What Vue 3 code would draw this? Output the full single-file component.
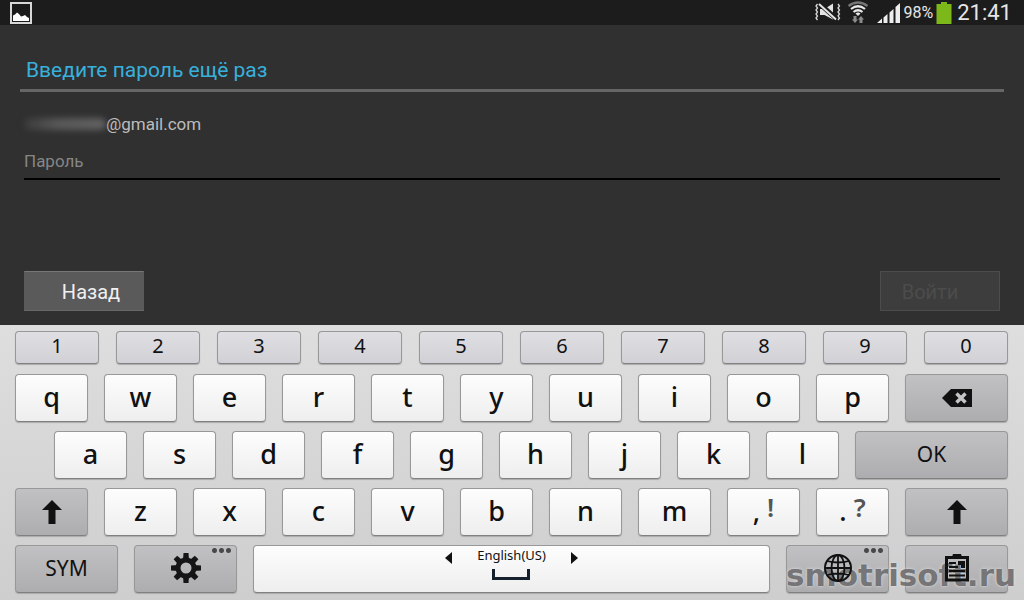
<script setup>
const digits = ['1', '2', '3', '4', '5', '6', '7', '8', '9', '0']
const rowTop = ['q', 'w', 'e', 'r', 't', 'y', 'u', 'i', 'o', 'p']
const rowHome = ['a', 's', 'd', 'f', 'g', 'h', 'j', 'k', 'l']
const rowBottom = ['z', 'x', 'c', 'v', 'b', 'n', 'm']
const teeth = [0, 45, 90, 135, 180, 225, 270, 315]
</script>

<template>
  <div class="screen">
    <header class="status">
      <svg class="picture" width="22" height="22" viewBox="0 0 22 22">
        <rect x="1" y="1" width="20" height="20" fill="#1b1b1b" stroke="#d8d8d8" stroke-width="2" />
        <path d="M3 19V13.500L5 12.500L7 10.500L9 12L11 14.500L13 14L15 13L17 15L19 16V19Z" fill="#fff" />
      </svg>
      <div class="indicators">
        <svg width="26" height="22" viewBox="0 0 26 22">
          <path d="M5 7H9.500L18 1.500V17.500L9.500 13H5Z" fill="#e4e4e4" />
          <path d="M2.500 2L1 4L2.500 6L1 8L2.500 10L1 12L2.500 14L1 16L2.500 18M23 2L24.500 4L23 6L24.500 8L23 10L24.500 12L23 14L24.500 16L23 18" fill="none" stroke="#d8d8d8" stroke-width="1.300" />
          <path d="M5 2L21 16.500" stroke="#1c1c1c" stroke-width="5" />
          <path d="M4 2L21 17.500" stroke="#e4e4e4" stroke-width="2" />
        </svg>
        <svg class="wifi" width="22" height="23" viewBox="0 0 22 23">
          <g fill="none" stroke-width="2.200">
            <path d="M1.500 5Q11 -2 20.500 5" stroke="#777" />
            <path d="M4 8Q11 2.500 18 8" stroke="#e8e8e8" />
            <path d="M6.500 11Q11 7.500 15.500 11" stroke="#e8e8e8" />
          </g>
          <path d="M8.500 12.500Q11 10.500 13.500 12.500L11 15Z" fill="#e8e8e8" />
          <path d="M6.500 15H9.500V18.500H11L8 22L5 18.500H6.500ZM12.500 22H15.500V18.500H17L14 15L11 18.500H12.500Z" fill="#8c8c8c" />
        </svg>
        <svg class="signal" width="24" height="22" viewBox="0 0 24 22">
          <path d="M0 21L5 16.500V21ZM6.500 21V15.500L10.500 12V21ZM12.500 21V10.500L16.500 7V21ZM18.500 21V5L23 1V21Z" fill="#eee" />
        </svg>
        <span class="percent">98%</span>
        <svg class="battery" width="16" height="22" viewBox="0 0 16 22">
          <path d="M5 0H11V2H15.500V22H0.500V2H5Z" fill="#7cb819" />
        </svg>
        <time class="clock">21:41</time>
      </div>
    </header>

    <main class="account">
      <h1>Введите пароль ещё раз</h1>
      <form class="form" @submit.prevent>
        <p class="email"><span class="smudge"></span><span>@gmail.com</span></p>
        <input type="password" placeholder="Пароль" aria-label="Пароль" />
        <div class="actions">
          <button type="button" class="back">Назад</button>
          <button type="submit" class="enter" disabled>Войти</button>
        </div>
      </form>
    </main>

    <section class="keyboard">
      <div class="row digits">
        <button v-for="k in digits" :key="k" class="key digit">{{ k }}</button>
      </div>
      <div class="row">
        <button v-for="k in rowTop" :key="k" class="key">{{ k }}</button>
        <button class="key dark wide" aria-label="Backspace">
          <svg width="30" height="18" viewBox="0 0 30 18">
            <path d="M0 9L9 0H30V18H9Z" fill="#111" />
            <path d="M14.500 4.500L23.500 13.500M23.500 4.500L14.500 13.500" stroke="#c4c4c6" stroke-width="3.500" />
          </svg>
        </button>
      </div>
      <div class="row home">
        <button v-for="k in rowHome" :key="k" class="key">{{ k }}</button>
        <button class="key dark ok">OK</button>
      </div>
      <div class="row">
        <button class="key dark" aria-label="Shift">
          <svg width="20" height="24" viewBox="0 0 20 24"><path d="M10 0L20 10H13.500V24H6.500V10H0Z" fill="#111" /></svg>
        </button>
        <button v-for="k in rowBottom" :key="k" class="key">{{ k }}</button>
        <button class="key pair"><span>,</span><sup>!</sup></button>
        <button class="key pair"><span>.</span><sup>?</sup></button>
        <button class="key dark wide" aria-label="Shift">
          <svg width="20" height="24" viewBox="0 0 20 24"><path d="M10 0L20 10H13.500V24H6.500V10H0Z" fill="#111" /></svg>
        </button>
      </div>
      <div class="row last">
        <button class="key dark wide">SYM</button>
        <button class="key dark wide" aria-label="Settings">
          <svg width="30" height="30" viewBox="-15 -15 30 30">
            <path v-for="a in teeth" :key="a" d="M-2.500 -15H2.500L3 -8H-3Z" :transform="`rotate(${a})`" fill="#151515" />
            <circle r="8" fill="none" stroke="#151515" stroke-width="5" />
          </svg>
          <i class="dots"></i>
        </button>
        <button class="key space" aria-label="English(US)">
          <svg width="7" height="12" viewBox="0 0 7 12"><path d="M7 0V12L0 6Z" fill="#111" /></svg>
          <span class="lang">English(US)
            <svg width="38" height="11" viewBox="0 0 38 11"><path d="M1.500 0V9.500H36.500V0" fill="none" stroke="#14202c" stroke-width="3" /></svg>
          </span>
          <svg width="7" height="12" viewBox="0 0 7 12"><path d="M0 0V12L7 6Z" fill="#111" /></svg>
        </button>
        <button class="key dark wide" aria-label="Language">
          <svg class="above" width="28" height="28" viewBox="-14 -14 28 28">
            <g fill="none" stroke="#111" stroke-width="1.800">
              <circle r="13" stroke-width="2" />
              <ellipse rx="6.500" ry="13" />
              <path d="M0 -13V13M-13 0H13M-11 -7Q0 -4 11 -7M-11 7Q0 4 11 7" />
            </g>
          </svg>
          <i class="dots"></i>
        </button>
        <button class="key dark wide" aria-label="Clipboard">
          <svg class="above" width="24" height="28" viewBox="0 0 24 28">
            <path d="M1.500 3.500H22.500V26H1.500Z" fill="none" stroke="#111" stroke-width="3" />
            <path d="M7 3L8 0H16L17 3V5H7ZM13 7H20V14H16V11H13Z" fill="#111" />
            <path d="M4 9H11M4 13H13M4 17H20M4 21.500H20" stroke="#111" stroke-width="2" />
          </svg>
        </button>
      </div>
      <div class="watermark">smotrisoft.ru</div>
    </section>
  </div>
</template>

<style>
body { background: #303030; }
</style>

<style scoped>
.screen {
  display: flex;
  flex-direction: column;
  min-height: 100vh;
  overflow: hidden;
  background: #303030;
  font-family: Roboto, "Noto Sans", sans-serif;
}
.status {
  display: flex;
  align-items: center;
  justify-content: space-between;
  height: 25px;
  padding: 0 12px 0 10px;
  background: #1c1c1c;
  color: #e6e6e6;
}
.indicators { display: flex; align-items: center; }
.wifi { margin-left: 6px; }
.signal { margin-left: 8px; }
.percent { margin-left: 3px; font-size: 16px; line-height: 25px; }
.battery { margin: 0 5px 0 3px; }
.clock { font-size: 22px; line-height: 25px; }
.account { flex: 1; padding: 0 20px 14px; }
h1 {
  margin: 0;
  padding: 29px 6px 3px;
  border-bottom: 3px solid #666;
  color: #38b0dc;
  font-size: 21px;
  font-weight: 400;
  line-height: 32px;
}
.form { padding: 20px 4px 0; }
.email {
  display: flex;
  align-items: center;
  margin: 0;
  color: #bcbcbc;
  font-size: 17px;
  line-height: 24px;
}
.smudge {
  width: 82px;
  height: 12px;
  border-radius: 8px;
  background: linear-gradient(90deg, #3a3a3a, #585858 40%, #626262);
  filter: blur(3px);
}
input {
  display: block;
  box-sizing: border-box;
  width: 100%;
  height: 44px;
  padding: 8px 0 0;
  border: 0;
  border-bottom: 2px solid #000;
  background: none;
  color: #ddd;
  font: 17px Roboto, "Noto Sans", sans-serif;
  outline: 0;
}
input::placeholder { color: #868686; opacity: 1; }
.actions { display: flex; justify-content: space-between; margin-top: 91px; }
.actions button {
  width: 120px;
  height: 40px;
  border: 1px solid #4c4c4c;
  border-radius: 0;
  font: 20px Roboto, "Noto Sans", sans-serif;
}
.actions .back { padding: 2px 0 0 14px; border-color: #777 #5a5a5a #686868; background: #5a5a5a; color: #f0f0f0; }
.actions .enter { padding: 2px 20px 0 0; background: #3d3d3d; color: #4c4c4c; }
.keyboard {
  position: relative;
  display: flex;
  flex-direction: column;
  gap: 9px;
  padding: 6px 16px 7px 15px;
  background: linear-gradient(#dedede, #cecece);
}
.row { display: flex; gap: 16px; }
.digits { gap: 17px; margin-bottom: 1px; }
.home { padding-left: 39px; }
.key {
  position: relative;
  display: flex;
  align-items: center;
  justify-content: center;
  flex: 71 1 0;
  box-sizing: border-box;
  min-width: 0;
  height: 48px;
  padding: 0 0 2px;
  border: 1px solid #989899;
  border-bottom-color: #808081;
  border-radius: 4px;
  background: linear-gradient(#fdfdfd, #eeeeef);
  box-shadow: 0 1px 1px #aaa;
  color: #111;
  font: 500 27px/30px "Noto Sans", sans-serif;
}
.digit { height: 33px; padding-bottom: 3px; background: linear-gradient(#dfdfe3, #d0d0d6); font-size: 20px; font-weight: 400; }
.dark { background: linear-gradient(#c1c1c3, #adadaf); font-size: 21px; font-weight: 400; padding: 0; }
.wide { flex-grow: 101; }
.ok { flex-grow: 151; padding-bottom: 3px; }
.last .dark { padding-bottom: 3px; }
.pair { gap: 7px; }
.pair sup { color: #555; font-size: 26px; font-weight: 600; line-height: 30px; margin-bottom: 9px; }
.space { flex-grow: 515; align-items: flex-start; justify-content: center; gap: 25px; padding: 0; font-weight: 400; }
.space > svg { margin-top: 6px; }
.lang { display: flex; flex-direction: column; align-items: center; gap: 5px; font-size: 13px; line-height: 18px; }
.dots {
  position: absolute;
  top: 2px;
  right: 4px;
  width: 21px;
  height: 5px;
  background: radial-gradient(circle at center, #484848 2px, transparent 3px) 0 0 / 7px 5px;
}
.above { position: relative; z-index: 2; }
.watermark {
  position: absolute;
  right: 8px;
  bottom: 5px;
  color: rgba(90, 90, 93, 0.8);
  font: bold 31px/40px "DejaVu Sans", sans-serif;
  text-shadow: 0 0 2px rgba(230, 230, 230, 0.7), 0 0 4px rgba(230, 230, 230, 0.5);
  pointer-events: none;
}
</style>
